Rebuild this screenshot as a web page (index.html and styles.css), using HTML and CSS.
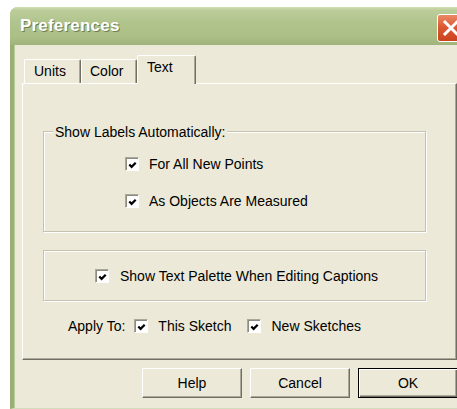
FILE: index.html
```html
<!DOCTYPE html>
<html>
<head>
<meta charset="utf-8">
<title>Preferences</title>
<link rel="stylesheet" href="styles.css">
</head>
<body>
<div class="window">
  <div class="titlebar">
    <span class="title">Preferences</span>
    <span class="close">
      <svg width="26" height="26" viewBox="0 0 26 26"><path d="M7 7 L19 19 M19 7 L7 19" stroke="#fff" stroke-width="3" stroke-linecap="square"/></svg>
    </span>
  </div>
  <div class="frame">
    <div class="tabs">
      <div class="tab units">Units</div>
      <div class="tab color">Color</div>
      <div class="tab text active">Text</div>
    </div>
    <div class="panel">
      <div class="group labels">
        <span class="group-title">Show Labels Automatically:</span>
        <label class="check"><span class="box"><svg width="12" height="12" viewBox="0 0 12 12"><path d="M2.5 5.5 L5 8 L9.5 3.5" fill="none" stroke="#000" stroke-width="2.4"/></svg></span>For All New Points</label>
        <label class="check"><span class="box"><svg width="12" height="12" viewBox="0 0 12 12"><path d="M2.5 5.5 L5 8 L9.5 3.5" fill="none" stroke="#000" stroke-width="2.4"/></svg></span>As Objects Are Measured</label>
      </div>
      <div class="group palette">
        <label class="check"><span class="box"><svg width="12" height="12" viewBox="0 0 12 12"><path d="M2.5 5.5 L5 8 L9.5 3.5" fill="none" stroke="#000" stroke-width="2.4"/></svg></span>Show Text Palette When Editing Captions</label>
      </div>
      <div class="apply">
        <span class="apply-label">Apply To:</span>
        <label class="check"><span class="box"><svg width="12" height="12" viewBox="0 0 12 12"><path d="M2.5 5.5 L5 8 L9.5 3.5" fill="none" stroke="#000" stroke-width="2.4"/></svg></span>This Sketch</label>
        <label class="check"><span class="box"><svg width="12" height="12" viewBox="0 0 12 12"><path d="M2.5 5.5 L5 8 L9.5 3.5" fill="none" stroke="#000" stroke-width="2.4"/></svg></span>New Sketches</label>
      </div>
    </div>
    <div class="buttons">
      <button class="btn">Help</button>
      <button class="btn">Cancel</button>
      <button class="btn default">OK</button>
    </div>
  </div>
</div>
</body>
</html>
```

FILE: styles.css
```css
body {
  margin: 0;
  background: #fff;
  overflow: hidden;
  font: 14px/18px "Liberation Sans", Arial, sans-serif;
  color: #000;
}

/* the dialog runs on past the right edge of the view */
.window {
  margin: 7px 0 0 10px;
  width: 447px;
  height: 402px;
  display: flex;
  flex-direction: column;
  border-radius: 8px 0 0 0;
  overflow: hidden;
  background: #a5bc81;
}

/* caption */
.titlebar {
  flex: none;
  height: 38px;
  display: flex;
  align-items: center;
  padding-left: 10px;
  background: linear-gradient(to bottom, #d3dfb4 0, #bccd9a 3px, #b1c48d 40%, #aabe85 80%, #9fb37a 100%);
}

.title {
  font: bold 17px/20px "Liberation Sans", Arial, sans-serif;
  color: #fff;
  text-shadow: 1px 1px 0 #6e7f4c;
  letter-spacing: 0.2px;
}

.close {
  margin-left: auto;
  margin-right: -8px;
  align-self: flex-start;
  margin-top: 7px;
  width: 28px;
  height: 28px;
  flex: none;
  box-sizing: border-box;
  border: 1px solid #fff;
  border-radius: 3px;
  background: linear-gradient(to bottom, #eb8a66 0, #dc5a33 45%, #c9431e 100%);
  display: flex;
  align-items: center;
  justify-content: center;
}

/* client area */
.frame {
  flex: 1;
  background: #ece9d8;
  border-left: 4px solid #98b073;
  border-bottom: 1px solid #d3dcbc;
  box-shadow: inset 1px 0 0 #b9cb9b;
  padding: 10px 0 0 8px;
}

.tabs {
  display: flex;
  align-items: flex-end;
  height: 28px;
  padding-left: 2px;
  position: relative;
  z-index: 1;
}

.tab {
  box-sizing: border-box;
  height: 24px;
  padding: 0 0 2px 9px;
  display: flex;
  align-items: center;
  border-top: 1px solid #fff;
  border-left: 1px solid #fff;
  border-right: 1px solid #716f64;
  box-shadow: inset -1px 0 0 #aca899;
  border-radius: 2px 2px 0 0;
  background: #ece9d8;
}

.tab.units { width: 57px; }
.tab.color { width: 56px; padding-left: 8px; }
.tab.text { width: 59px; }

.tab.active {
  height: 29px;
  margin-bottom: -1px;
  padding-bottom: 6px;
}

.panel {
  box-sizing: border-box;
  width: 435px;
  height: 277px;
  border-top: 1px solid #fff;
  border-left: 1px solid #fff;
  border-right: 1px solid #716f64;
  border-bottom: 1px solid #716f64;
  box-shadow: inset -1px -1px 0 #aca899;
  padding: 47px 0 0 20px;
}

.group {
  position: relative;
  box-sizing: border-box;
  width: 383px;
  border: 1px solid #c5c2b2;
  box-shadow: inset 1px 1px 0 #fff, 1px 1px 0 #fff;
  display: flex;
  flex-direction: column;
}

.group-title {
  position: absolute;
  top: -9px;
  left: 9px;
  padding: 0 2px;
  background: #ece9d8;
}

.labels {
  height: 101px;
  padding: 23px 0 0 81px;
  gap: 19px;
}

.palette {
  height: 51px;
  margin-top: 18px;
  padding: 16px 0 0 51px;
}

.check {
  display: flex;
  align-items: center;
  gap: 10px;
  white-space: nowrap;
}

.palette .check { gap: 11px; }

.box {
  box-sizing: border-box;
  width: 14px;
  height: 14px;
  flex: none;
  background: #fff;
  border: 1px solid;
  border-color: #aca899 #fff #fff #aca899;
  box-shadow: inset 1px 1px 0 #8d8b80;
  display: flex;
  align-items: center;
  justify-content: center;
  padding: 1px 0 0 1px;
}

.apply {
  display: flex;
  align-items: center;
  margin-top: 16px;
  padding-left: 25px;
}

.apply-label { margin-right: 9px; }
.apply .check + .check { margin-left: 16px; }

.buttons {
  display: flex;
  gap: 8px;
  margin-top: 8px;
  padding-left: 120px;
}

.btn {
  box-sizing: border-box;
  width: 100px;
  height: 30px;
  flex: none;
  font: 14px "Liberation Sans", Arial, sans-serif;
  color: #000;
  background: #ece9d8;
  border: 1px solid;
  border-color: #fff #716f64 #716f64 #fff;
  box-shadow: inset -1px -1px 0 #aca899;
  padding: 0;
}

.btn.default {
  border: 1px solid #000;
  box-shadow: inset 1px 1px 0 #fff, inset -1px -1px 0 #716f64, inset -2px -2px 0 #aca899;
}
```
